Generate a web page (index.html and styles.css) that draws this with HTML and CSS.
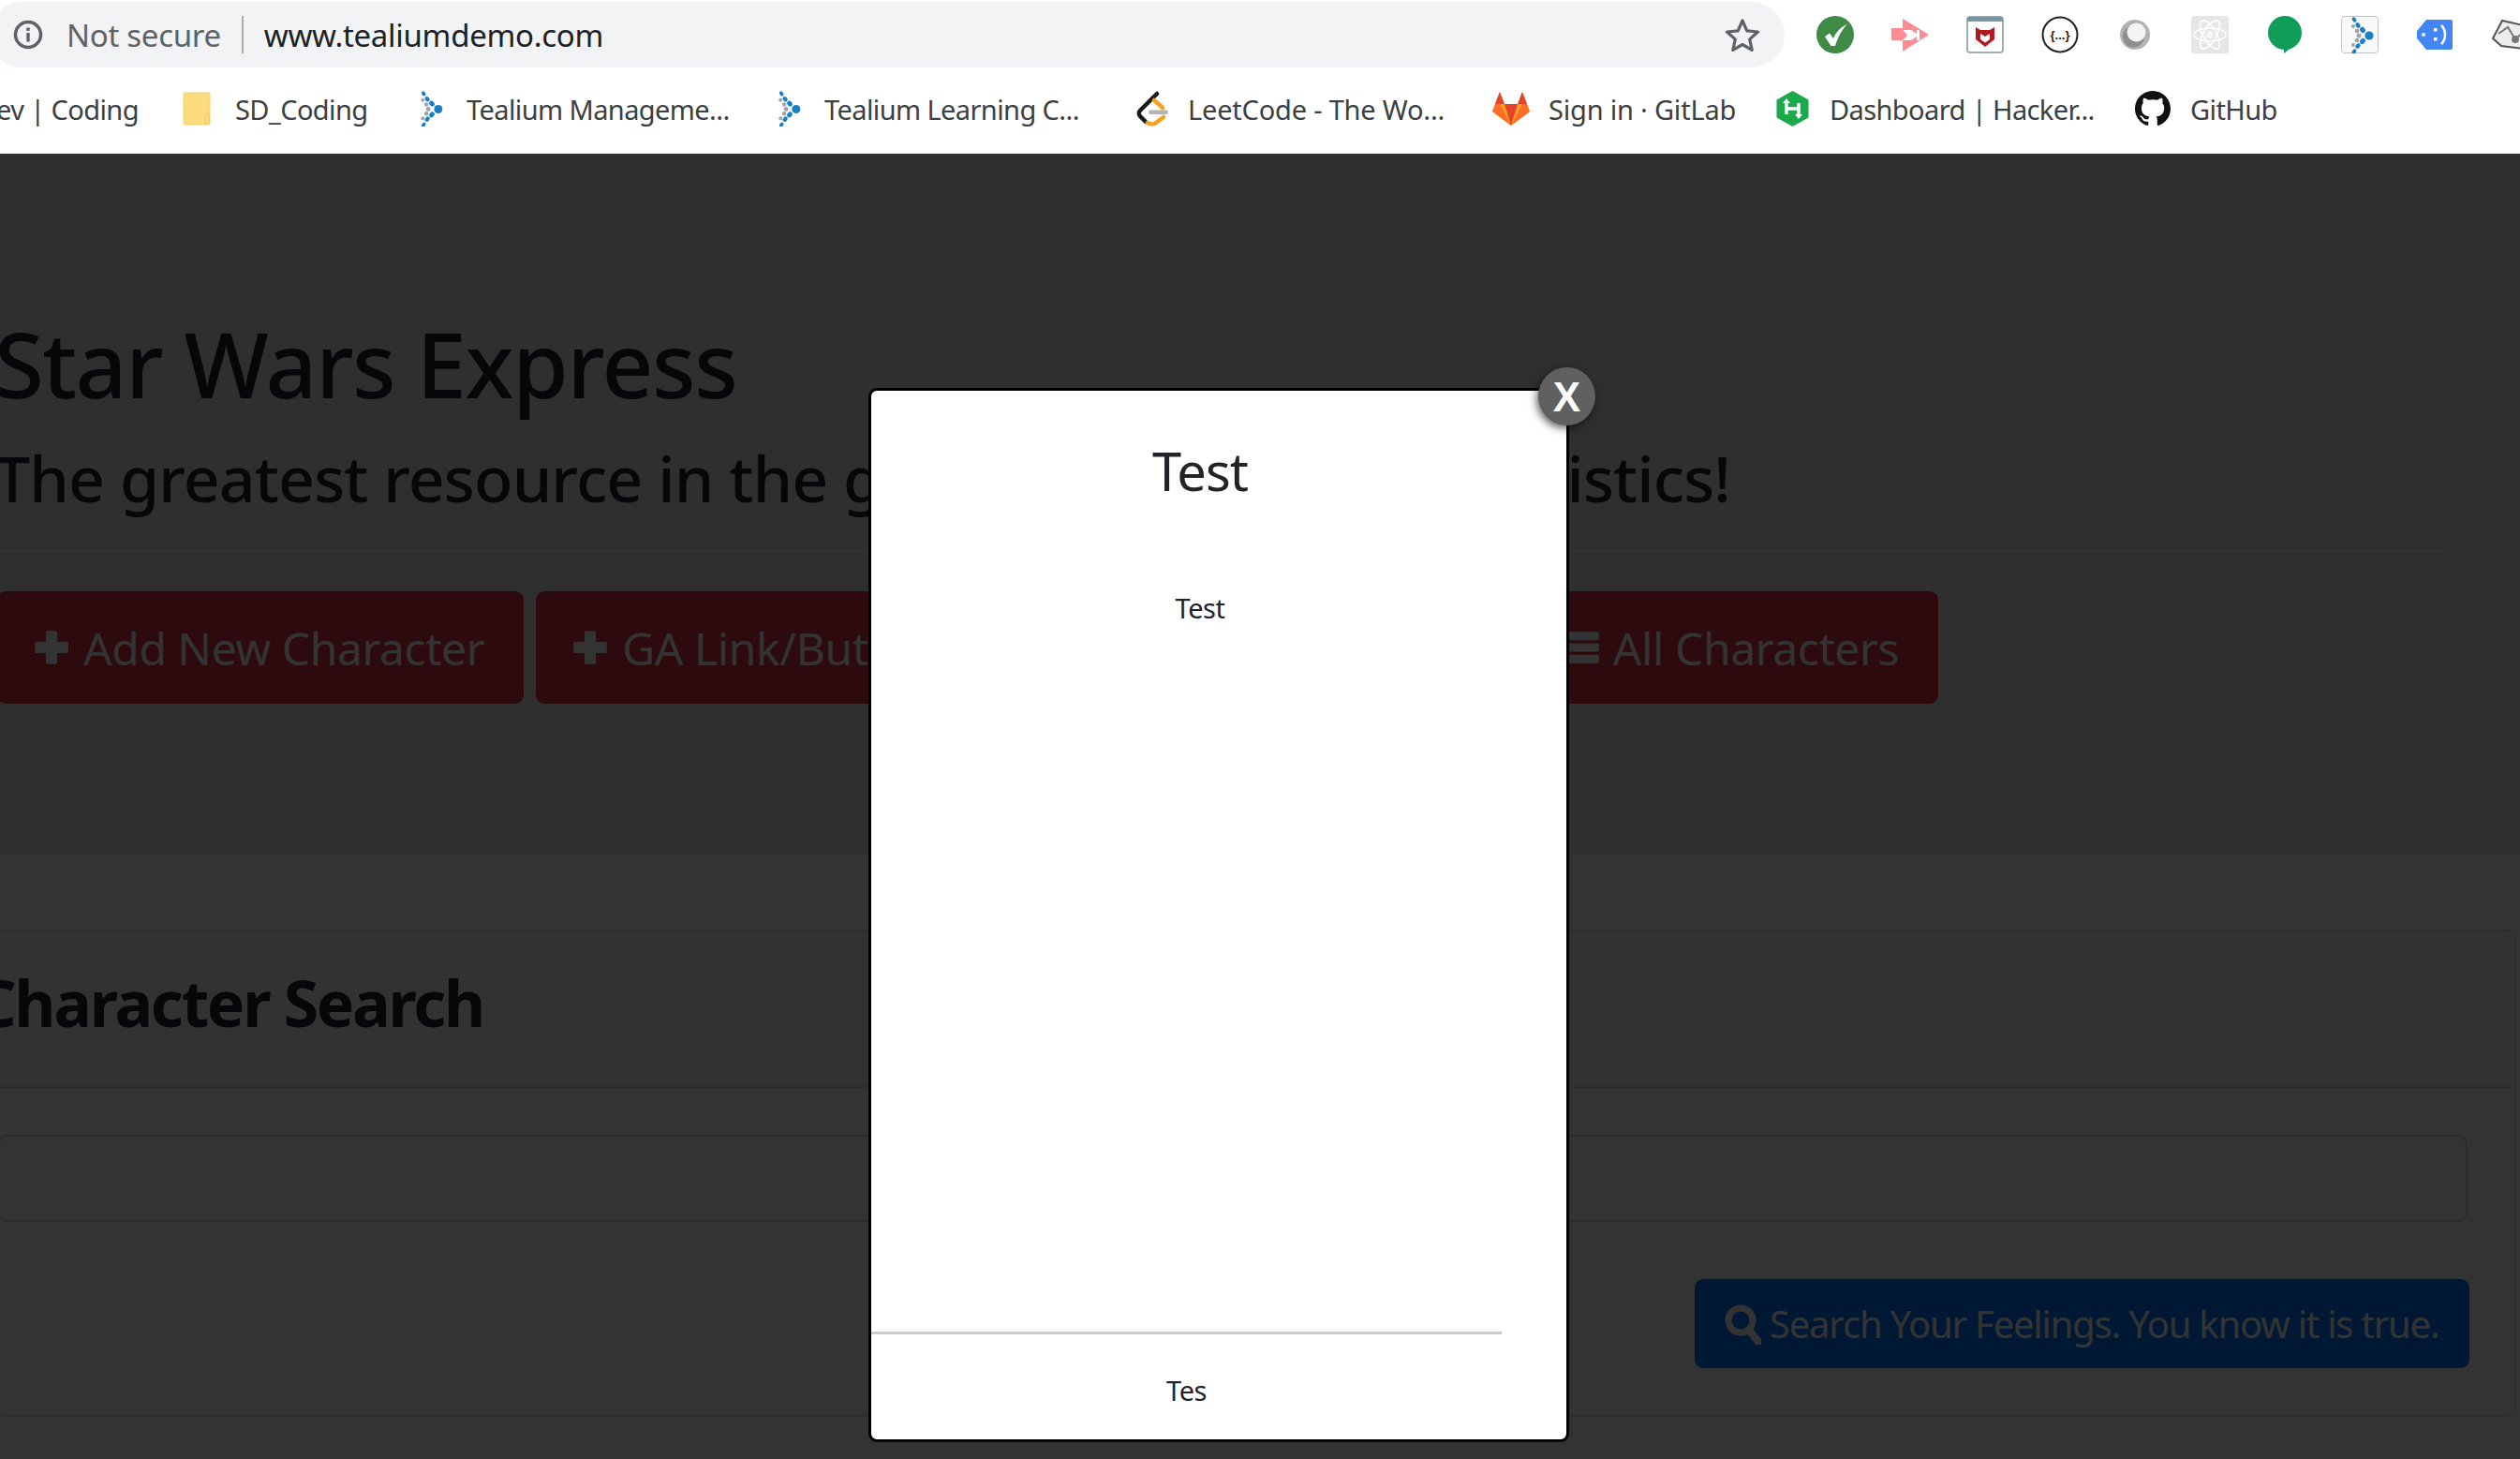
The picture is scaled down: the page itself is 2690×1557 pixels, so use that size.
FILE: index.html
```html
<!DOCTYPE html>
<html>
	<head>
		<meta charset="utf-8">
		<title>Star Wars Express</title>
		<link rel="stylesheet" href="styles.css">
	</head>
	<body>
		<svg class="defs" width="0" height="0">
			<symbol id="tealium-dots" viewBox="10 1 26 39">
				<g fill="#1b7fc4">
					<ellipse cx="14" cy="4" rx="2" ry="2.800" transform="rotate(-30 14 4)"/>
					<ellipse cx="18" cy="10" rx="2.300" ry="3" transform="rotate(-35 18 10)"/>
					<ellipse cx="23" cy="15" rx="2.600" ry="3.200" transform="rotate(-40 23 15)"/>
					<circle cx="30" cy="21" r="4.600"/>
					<ellipse cx="23" cy="27" rx="2.600" ry="3.200" transform="rotate(40 23 27)"/>
					<ellipse cx="18" cy="32" rx="2.300" ry="3" transform="rotate(35 18 32)"/>
					<ellipse cx="14" cy="38" rx="2" ry="2.800" transform="rotate(30 14 38)"/>
				</g>
				<g fill="#9fa4a8">
					<circle cx="13" cy="11" r="2"/><circle cx="17" cy="16" r="2.300"/><circle cx="19" cy="21" r="2.500"/>
					<circle cx="17" cy="26" r="2.300"/><circle cx="13" cy="31" r="2"/>
				</g>
			</symbol>
		</svg>

		<div class="toolbar">
			<div class="urlbar">
				<svg class="info-icon" viewBox="0 0 32 32">
					<circle cx="16" cy="16" r="13.500" fill="none" stroke="#5f6368" stroke-width="3.500"/>
					<rect x="14.300" y="14" width="3.400" height="9.500" fill="#5f6368"/>
					<rect x="14.300" y="8.500" width="3.400" height="3.400" fill="#5f6368"/>
				</svg>
				<span class="not-secure">Not secure</span>
				<span class="url-sep"></span>
				<span class="url-text">www.tealiumdemo.com</span>
				<svg class="star-icon" viewBox="0 0 38 36">
					<path d="M19 3l4.800 10.800 11.700 1.200-8.800 7.900 2.500 11.500L19 28.500 8.800 34.400l2.500-11.500L2.500 15l11.700-1.200z" fill="none" stroke="#5f6368" stroke-width="3.200" stroke-linejoin="round"/>
				</svg>
			</div>
			<div class="ext-row">
				<svg class="ext" viewBox="0 0 40 40">
					<circle cx="20" cy="20" r="20" fill="#3f8b46"/>
					<path d="M9 22l5-3.500 4 5.500C21 17 26 12 33 8.500 26 16 22.500 24 20 32h-4.500z" fill="#fff"/>
				</svg>
				<svg class="ext" viewBox="0 0 40 40">
					<path d="M12 3l28 17-28 18V26H0V13h12z" fill="#ff8b92"/>
					<path d="M12 15h9l6 4v-4h3v11h-3v-4l-6 4h-9l5-5.500z" fill="#fff"/>
				</svg>
				<svg class="ext" viewBox="0 0 40 40">
					<rect x="1" y="1" width="38" height="38" rx="3" fill="#fff" stroke="#a1adb6" stroke-width="2"/>
					<path d="M1 4a3 3 0 0 1 3-3h32a3 3 0 0 1 3 3v2H1z" fill="#7c93a5"/>
					<path d="M10 12l5 3h10l5-3v13l-10 8-10-8z" fill="#b3181f"/>
					<path d="M15 19l5 3 5-3v6l-5 3.500-5-3.500z" fill="#fff"/>
				</svg>
				<svg class="ext" viewBox="0 0 40 40">
					<circle cx="20" cy="20" r="18.500" fill="#fff" stroke="#222" stroke-width="2"/>
					<text class="json-label" x="20" y="24.500" text-anchor="middle">{...}</text>
				</svg>
				<svg class="ext" viewBox="0 0 40 40">
					<circle cx="20" cy="20" r="16" fill="#b2b2b2"/>
					<circle cx="18.500" cy="22" r="11.500" fill="#8e8e8e"/>
					<circle cx="21.500" cy="17.500" r="10" fill="#f4f4f4"/>
				</svg>
				<svg class="ext" viewBox="0 0 40 40">
					<rect width="40" height="40" rx="3" fill="#e6e6e6"/>
					<g fill="none" stroke="#fff" stroke-width="1.600">
						<ellipse cx="20" cy="20" rx="17" ry="7"/>
						<ellipse cx="20" cy="20" rx="17" ry="7" transform="rotate(60 20 20)"/>
						<ellipse cx="20" cy="20" rx="17" ry="7" transform="rotate(120 20 20)"/>
					</g>
					<circle cx="20" cy="20" r="4" fill="#f5f5f5"/>
				</svg>
				<svg class="ext" viewBox="0 0 40 40">
					<circle cx="20" cy="18" r="18" fill="#0f9d58"/>
					<path d="M19 30h12L19 40z" fill="#0f9d58"/>
				</svg>
				<svg class="ext" viewBox="0 0 40 40">
					<rect x="0.500" y="0.500" width="39" height="39" rx="3" fill="#f8f8f8" stroke="#c4c4c4"/>
					<use href="#tealium-dots" x="10" y="1" width="26" height="39"/>
				</svg>
				<svg class="ext" viewBox="0 0 40 40">
					<path d="M11 4h26a2 2 0 0 1 2 2v28a2 2 0 0 1-2 2H11L1 24v-8z" fill="#4285f4"/>
					<circle cx="8" cy="20" r="2" fill="#fff"/>
					<rect x="19" y="13" width="3.500" height="3.500" fill="#fff"/>
					<rect x="19" y="23" width="3.500" height="3.500" fill="#fff"/>
					<path d="M27 10c3 3 4 6 4 10s-1 7-4 10" fill="none" stroke="#fff" stroke-width="2.500"/>
				</svg>
				<svg class="ext" viewBox="0 0 40 40">
					<path d="M2 24L12 5l27 6-3 24-25-3z" fill="#eee" stroke="#555" stroke-width="2"/>
					<path d="M8 19l10-7 8 13 12-11" fill="none" stroke="#777" stroke-width="2"/>
					<circle cx="26" cy="25" r="4" fill="#777"/>
				</svg>
			</div>
		</div>

		<div class="bookmarks">
			<div class="bm bm-first"><span>ev | Coding</span></div>
			<div class="bm">
				<svg class="bm-icon folder" viewBox="0 0 30 36">
					<path d="M2 1h26a1 1 0 0 1 1 1v32a1 1 0 0 1-1 1H2a1 1 0 0 1-1-1V2a1 1 0 0 1 1-1z" fill="#fddc80" stroke="#f6d268"/>
					<rect x="24" y="23" width="4" height="11" rx="2" fill="#fddc80" stroke="#e9c55b"/>
				</svg>
				<span>SD_Coding</span>
			</div>
			<div class="bm">
				<svg class="bm-icon tealium" viewBox="10 1 26 39"><use href="#tealium-dots" x="10" y="1" width="26" height="39"/></svg>
				<span>Tealium Manageme...</span>
			</div>
			<div class="bm">
				<svg class="bm-icon tealium" viewBox="10 1 26 39"><use href="#tealium-dots" x="10" y="1" width="26" height="39"/></svg>
				<span>Tealium Learning C...</span>
			</div>
			<div class="bm bm-loose">
				<svg class="bm-icon leet" viewBox="0 0 34 38">
					<path d="M22 3L4 21a4.500 4.500 0 0 0 0 6l6 6" fill="none" stroke="#1a1a1a" stroke-width="4.500" stroke-linecap="round"/>
					<path d="M19 10l9 8M12 34c3 2 7 2 9 0l8-6" fill="none" stroke="#f7a11f" stroke-width="4.500" stroke-linecap="round"/>
					<rect x="13" y="20.500" width="21" height="4.500" rx="2.200" fill="#b3b3b3"/>
				</svg>
				<span>LeetCode - The Wo...</span>
			</div>
			<div class="bm bm-loose">
				<svg class="bm-icon gitlab" viewBox="0 0 42 38">
					<path d="M21 37L1 22 4 14 9 1l5 13h14l5-13 5 13 3 8z" fill="#fca326"/>
					<path d="M21 37L9 14H4l-3 8z" fill="#fc6d26"/>
					<path d="M21 37l12-23h5l3 8z" fill="#fc6d26"/>
					<path d="M21 37L14 14h14z" fill="#e24329"/>
					<path d="M4 14L9 1l5 13zM28 14l5-13 5 13z" fill="#e24329"/>
				</svg>
				<span>Sign in · GitLab</span>
			</div>
			<div class="bm">
				<svg class="bm-icon hacker" viewBox="0 0 36 38">
					<path d="M18 0l17 9.500v19L18 38 1 28.500v-19z" fill="#1ba94c"/>
					<path d="M11.500 13v12M24.500 13v12M11.500 19h13" stroke="#fff" stroke-width="3.500" fill="none"/>
					<path d="M7.500 13h8L11.500 8zM20.500 25h8l-4 5z" fill="#fff"/>
				</svg>
				<span>Dashboard | Hacker...</span>
			</div>
			<div class="bm">
				<svg class="bm-icon github" viewBox="0 0 16 16">
					<path d="M8 0C3.580 0 0 3.580 0 8c0 3.540 2.290 6.530 5.470 7.590.4.070.55-.17.55-.38 0-.19-.01-.82-.01-1.490-2.010.37-2.530-.49-2.690-.94-.09-.23-.48-.94-.82-1.130-.28-.15-.68-.52-.01-.53.630-.01 1.080.580 1.230.820.720 1.210 1.870.870 2.330.660.070-.520.280-.870.510-1.070-1.780-.200-3.640-.890-3.640-3.950 0-.870.310-1.590.820-2.150-.080-.200-.360-1.020.080-2.120 0 0 .670-.210 2.200.820.640-.180 1.320-.270 2-.270s1.360.090 2 .270c1.530-1.040 2.200-.820 2.200-.820.440 1.100.160 1.920.080 2.120.510.560.820 1.270.820 2.150 0 3.070-1.870 3.750-3.650 3.950.290.250.540.730.540 1.480 0 1.070-.010 1.930-.010 2.200 0 .210.150.460.550.380A8.010 8.010 0 0 0 16 8c0-4.420-3.580-8-8-8z" fill="#111"/>
				</svg>
				<span>GitHub</span>
			</div>
		</div>

		<div class="page">
			<div class="intro">
				<h1 class="page-title">Star Wars Express</h1>
				<h2 class="page-sub">The greatest resource in the galaxy for Star Wars statistics!</h2>
				<hr class="intro-line">
				<div class="btn-row">
					<a class="btn btn-red">
						<svg class="btn-icon" viewBox="0 0 36 36"><path d="M14 2h8a1.500 1.500 0 0 1 1.500 1.500V12.500H32.500A1.500 1.500 0 0 1 34 14v8a1.500 1.500 0 0 1-1.500 1.500H23.500v9A1.500 1.500 0 0 1 22 34h-8a1.500 1.500 0 0 1-1.500-1.500v-9H3.500A1.500 1.500 0 0 1 2 22v-8a1.500 1.500 0 0 1 1.500-1.500h9v-9A1.500 1.500 0 0 1 14 2z" fill="currentColor"/></svg>
						Add New Character
					</a>
					<a class="btn btn-red">
						<svg class="btn-icon" viewBox="0 0 36 36"><path d="M14 2h8a1.500 1.500 0 0 1 1.500 1.500V12.500H32.500A1.500 1.500 0 0 1 34 14v8a1.500 1.500 0 0 1-1.500 1.500H23.500v9A1.500 1.500 0 0 1 22 34h-8a1.500 1.500 0 0 1-1.500-1.500v-9H3.500A1.500 1.500 0 0 1 2 22v-8a1.500 1.500 0 0 1 1.500-1.500h9v-9A1.500 1.500 0 0 1 14 2z" fill="currentColor"/></svg>
						GA Link/Button
					</a>
					<a class="btn btn-red btn-all">
						<svg class="btn-icon" viewBox="0 0 36 36">
							<rect x="1" y="3" width="34" height="8" rx="1.500" fill="currentColor"/>
							<rect x="1" y="14" width="34" height="8" rx="1.500" fill="currentColor"/>
							<rect x="1" y="25" width="34" height="8" rx="1.500" fill="currentColor"/>
						</svg>
						All Characters
					</a>
				</div>
			</div>

			<div class="card">
				<div class="card-head">
					<h2 class="card-title">Character Search</h2>
				</div>
				<div class="card-body">
					<div class="search-input"></div>
					<div class="search-foot">
						<a class="btn btn-blue">
							<svg class="btn-icon search-icon" viewBox="0 0 40 44">
								<circle cx="18" cy="18" r="13" fill="none" stroke="currentColor" stroke-width="7"/>
								<path d="M27 28l10 13" stroke="currentColor" stroke-width="8" stroke-linecap="round"/>
							</svg>
							Search Your Feelings. You know it is true.
						</a>
					</div>
				</div>
			</div>

			<div class="overlay"></div>

			<div class="modal">
				<div class="modal-top">
					<h2 class="modal-title">Test</h2>
					<p class="modal-text">Test</p>
				</div>
				<hr class="modal-line">
				<p class="modal-foot">Tes</p>
				<div class="modal-close">X</div>
			</div>
		</div>
	</body>
</html>
```

FILE: styles.css
```css
html, body {
	margin: 0;
	height: 1557px;
	overflow: hidden;
	background: #fff;
}

body {
	font-family: "Noto Sans", "Open Sans", sans-serif;
	color: #212529;
}

.defs {
	display: block;
}

/* browser chrome */
.toolbar {
	display: flex;
	align-items: flex-start;
	height: 74px;
	padding-top: 2px;
	box-sizing: border-box;
}

.urlbar {
	display: flex;
	align-items: center;
	flex: none;
	width: 1917px;
	height: 70px;
	margin-left: -12px;
	padding-left: 26px;
	box-sizing: border-box;
	background: #f1f3f4;
	border-radius: 35px;
}

.info-icon {
	width: 32px;
	height: 32px;
	flex: none;
}

.not-secure {
	margin-left: 25px;
	font-size: 33px;
	letter-spacing: -0.3px;
	color: #5f6368;
}

.url-sep {
	width: 2px;
	height: 40px;
	margin-left: 22px;
	background: #a9acaf;
}

.url-text {
	margin-left: 22px;
	font-size: 33px;
	letter-spacing: -0.3px;
	color: #202124;
}

.star-icon {
	width: 38px;
	height: 36px;
	margin-left: auto;
	margin-right: 26px;
}

.ext-row {
	display: flex;
	gap: 40px;
	margin-left: 34px;
	padding-top: 15px;
	flex: none;
}

.ext {
	width: 40px;
	height: 40px;
	flex: none;
}

.json-label {
	font-family: "Liberation Sans", sans-serif;
	font-size: 13px;
	font-weight: 700;
	fill: #222;
}

/* bookmarks bar */
.bookmarks {
	display: grid;
	grid-template-columns: 195px 253px 382px 383px 379px 303px 383px 412px;
	align-items: center;
	height: 90px;
	padding-bottom: 6px;
	box-sizing: border-box;
	font-size: 29px;
	letter-spacing: -0.6px;
	color: #3c4043;
}

.bm {
	display: flex;
	align-items: center;
	white-space: nowrap;
}

.bm-first {
	margin-left: -4px;
}

.bm-loose {
	letter-spacing: -0.2px;
}

.bm-icon {
	flex: none;
	height: 38px;
}

.folder {
	width: 30px;
	margin-right: 26px;
}

.tealium {
	width: 26px;
	margin-right: 24px;
}

.leet {
	width: 34px;
	margin-right: 21px;
}

.gitlab {
	width: 42px;
	margin-right: 19px;
}

.hacker {
	width: 37px;
	margin-right: 21px;
}

.github {
	width: 40px;
	margin-right: 20px;
}

/* page behind the modal */
.page {
	position: relative;
	height: 1393px;
	overflow: hidden;
	background: #fff;
}

.intro {
	width: 2700px;
	height: 748px;
	margin-left: -6px;
	padding-top: 168px;
	box-sizing: border-box;
	background: #e9ecef;
}

.page-title {
	margin: 0;
	font-size: 96px;
	font-weight: 500;
	line-height: 112px;
	letter-spacing: -1.500px;
}

.page-sub {
	margin: 25px 0 0;
	font-size: 68px;
	font-weight: 500;
	line-height: 82px;
	letter-spacing: -0.9px;
	white-space: nowrap;
}

.intro-line {
	width: 2611px;
	margin: 36px 0 42px;
	border: 0;
	border-top: 2px solid #fff;
}

.btn-row {
	display: flex;
	gap: 13px;
	width: 2072px;
	margin-left: 3px;
}

.btn {
	display: flex;
	align-items: center;
	box-sizing: border-box;
	color: #fff;
	border-radius: 9px;
	white-space: nowrap;
}

.btn-red {
	height: 120px;
	padding: 0 42px 0 38px;
	font-size: 48px;
	letter-spacing: -0.4px;
	background: #dc3545;
}

.btn-all {
	margin-left: auto;
}

.btn-icon {
	width: 40px;
	height: 40px;
	margin-right: 14px;
	flex: none;
}

.card {
	width: 2690px;
	height: 520px;
	margin-top: 80px;
	margin-left: -4px;
	box-sizing: border-box;
	border: 2px solid #dfdfdf;
	border-radius: 9px;
}

.card-head {
	height: 167px;
	box-sizing: border-box;
	background: #f7f7f7;
	border-bottom: 2px solid #dfdfdf;
}

.card-title {
	margin: 0 0 0 -24px;
	padding-top: 35px;
	font-size: 68px;
	line-height: 82px;
	font-weight: 700;
	letter-spacing: -2.300px;
}

.card-body {
	padding: 50px 50px 0 0;
}

.search-input {
	height: 93px;
	box-sizing: border-box;
	border: 2px solid #ced4da;
	border-radius: 9px;
}

.search-foot {
	display: flex;
	justify-content: flex-end;
	margin: 61px -2px 0 0;
}

.btn-blue {
	width: 827px;
	height: 95px;
	padding-left: 31px;
	font-size: 40px;
	letter-spacing: -1.200px;
	background: #007bff;
}

.search-icon {
	width: 40px;
	height: 44px;
	margin-right: 9px;
}

.overlay {
	position: absolute;
	inset: 0;
	background: rgba(0, 0, 0, 0.8);
}

/* modal */
.modal {
	position: absolute;
	top: 250px;
	left: 927px;
	display: flex;
	flex-direction: column;
	width: 748px;
	height: 1125px;
	box-sizing: border-box;
	background: #fff;
	border: 3px solid #000;
	border-radius: 9px;
}

.modal-top {
	flex: 1;
	width: 702px;
	text-align: center;
}

.modal-title {
	margin: 0;
	padding-top: 50px;
	font-size: 56px;
	font-weight: 400;
	line-height: 70px;
	letter-spacing: -1px;
}

.modal-text {
	margin: 92px 0 0;
	font-size: 29px;
	line-height: 40px;
	letter-spacing: -0.500px;
}

.modal-line {
	width: 673px;
	margin: 0;
	border: 0;
	border-top: 3px solid #ccc;
}

.modal-foot {
	width: 673px;
	height: 112px;
	margin: 0;
	padding-top: 40px;
	box-sizing: border-box;
	text-align: center;
	font-size: 29px;
	line-height: 40px;
	letter-spacing: -0.500px;
}

.modal-close {
	position: absolute;
	top: -25px;
	right: -31px;
	display: flex;
	align-items: center;
	justify-content: center;
	width: 61px;
	height: 62px;
	padding-top: 1px;
	box-sizing: border-box;
	background: #606060;
	color: #fff;
	border-radius: 50%;
	font-family: "Liberation Sans", sans-serif;
	font-size: 44px;
	font-weight: 700;
	box-shadow: -2px 3px 8px rgba(0, 0, 0, 0.6);
}
```
